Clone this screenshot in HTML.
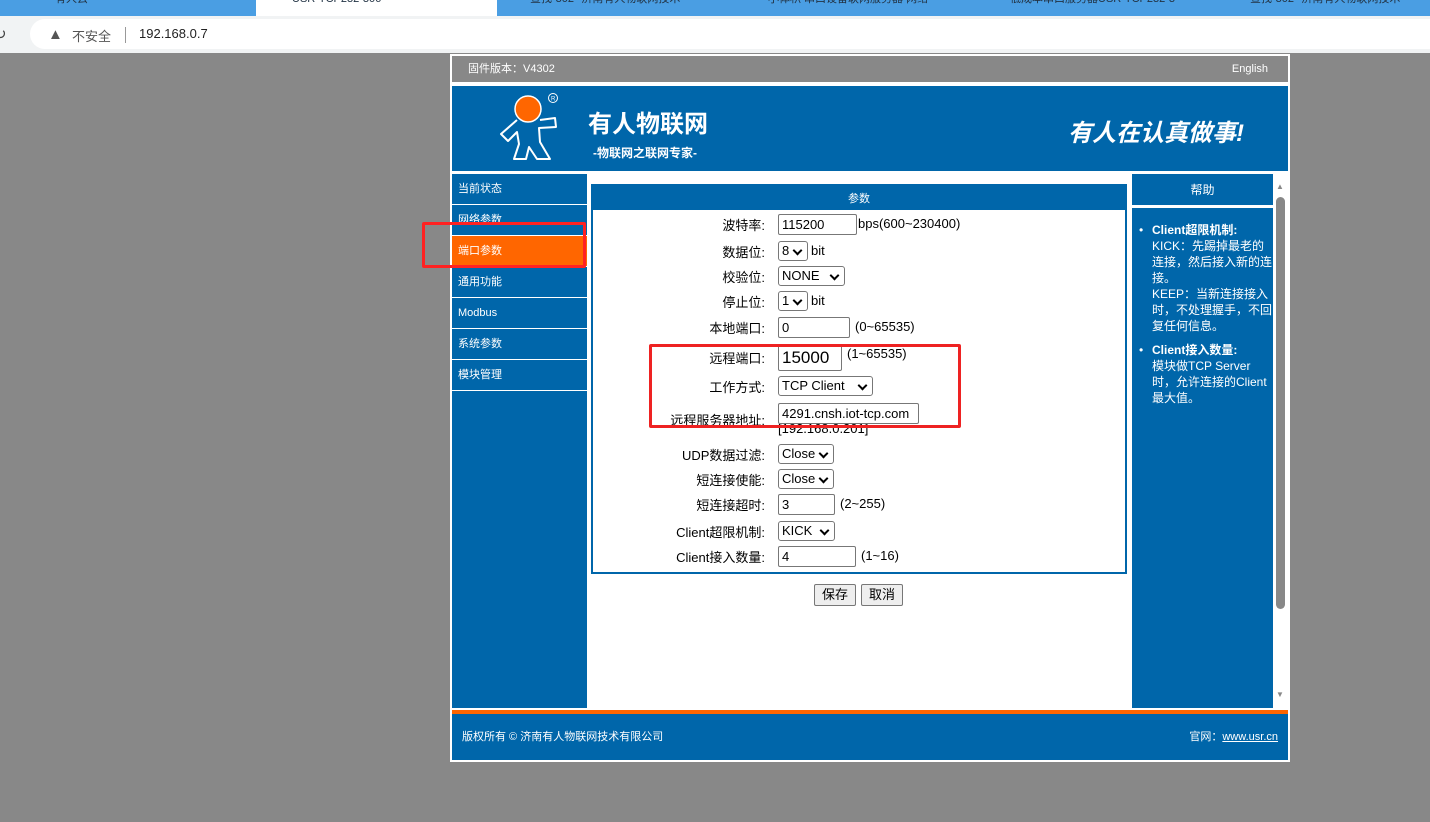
<!DOCTYPE html>
<html><head><meta charset="utf-8">
<style>
*{margin:0;padding:0;box-sizing:border-box}
body{width:1430px;height:822px;background:#888;font-family:"Liberation Sans","Noto Sans CJK SC",sans-serif;font-size:12px;position:relative;overflow:hidden;color:#000}
.abs{position:absolute}
.tabs{left:0;top:0;width:1430px;height:16px;background:#4a9ee3}
.tab{top:0;height:16px;color:#234;font-size:11px;line-height:0px;white-space:nowrap;overflow:hidden}
.addr{left:0;top:16px;width:1430px;height:37px;background:#f1f3f4}
.addrin{left:30px;top:19px;width:1420px;height:30px;background:#fff;border-radius:15px}
.panel{left:450px;top:54px;width:840px;height:708px;background:#fff}
.blue{background:#0066aa;color:#fff}
.nav div{position:absolute;left:452px;width:135px;height:30px;background:#0066aa;color:#fff;font-size:11px;line-height:30px;padding-left:6px}
.row{position:absolute;left:592px;width:533px;height:24px;font-size:13px}
.row .l{position:absolute;right:360px;top:1px;white-space:nowrap}
.row .f{position:absolute;left:186px;top:0}
.inp{display:inline-block;height:21px;border:1px solid #777;border-radius:2px;padding-left:3px;line-height:19px;font-size:13px;vertical-align:top;background:#fff}
.sel{display:inline-block;height:20px;border:1px solid #777;border-radius:3px;padding-left:3px;line-height:18px;font-size:13px;vertical-align:top;position:relative;background:#fff}
.sel:after{content:"";position:absolute;right:6px;top:5px;width:5px;height:5px;border-right:2px solid #000;border-bottom:2px solid #000;transform:rotate(45deg)}
.t{display:inline-block;vertical-align:top;line-height:19px;margin-left:3px}
.btn{position:absolute;top:584px;height:22px;border:1px solid #777;border-radius:2px;background:#eee;font-size:13px;line-height:20px;text-align:center}
</style></head><body>
<div class="abs tabs"></div>
<div class="abs" style="left:256px;top:0;width:241px;height:16px;background:#fff"></div>
<div class="abs tab" style="left:55px;top:-7px;height:14px;line-height:12px">有人云</div>
<div class="abs tab" style="left:292px;top:-7px;height:14px;line-height:12px">USR-TCP232-306</div>
<div class="abs tab" style="left:530px;top:-7px;height:14px;line-height:12px">查找“302”-济南有人物联网技术</div>
<div class="abs tab" style="left:768px;top:-7px;height:14px;line-height:12px">小体积 串口设备联网服务器 网络</div>
<div class="abs tab" style="left:1010px;top:-7px;height:14px;line-height:12px">低成本串口服务器USR-TCP232-3</div>
<div class="abs tab" style="left:1250px;top:-7px;height:14px;line-height:12px">查找“302”-济南有人物联网技术</div>
<div class="abs addr"></div>
<div class="abs addrin"></div>
<div class="abs" style="left:48px;top:26px;font-size:15px;color:#555">▲</div>
<div class="abs" style="left:72px;top:26px;font-size:13px;color:#555">不安全</div>
<div class="abs" style="left:125px;top:27px;width:1px;height:16px;background:#999"></div>
<div class="abs" style="left:139px;top:26px;font-size:13px;color:#222">192.168.0.7</div>
<div class="abs" style="left:-6px;top:25px;font-size:15px;color:#444">↻</div>

<div class="abs panel"></div>
<div class="abs" style="left:452px;top:56px;width:836px;height:26px;background:#888;color:#fff;font-size:11px;line-height:26px"><span style="margin-left:16px">固件版本：V4302</span><span style="position:absolute;right:20px">English</span></div>
<div class="abs blue" style="left:452px;top:86px;width:836px;height:85px"></div>
<svg class="abs" style="left:495px;top:90px" width="70" height="75" viewBox="0 0 70 75">
<circle cx="33" cy="19" r="13" fill="#f60" stroke="#fff" stroke-width="1.5"/>
<circle cx="58" cy="8" r="4.5" fill="none" stroke="#fff" stroke-width="1"/>
<text x="56" y="10.5" font-size="6" fill="#fff" font-family="Liberation Sans">R</text>
<path d="M22 30 L6 44 L13 51 L22 42 L24 54 L19 69 L31 69 L34 57 L42 69 L55 69 L45 52 L44 38 L61 37 L60 28 L45 30" fill="none" stroke="#fff" stroke-width="2" stroke-linejoin="round"/>
</svg>
<div class="abs" style="left:588px;top:104px;color:#fff;font-size:24px;font-weight:bold">有人物联网</div>
<div class="abs" style="left:593px;top:144px;color:#fff;font-size:12px;font-weight:bold">-物联网之联网专家-</div>
<div class="abs" style="left:1068px;top:113px;color:#fff;font-size:24px;font-weight:bold;font-style:italic">有人在认真做事!</div>

<div class="nav">
<div style="top:174px">当前状态</div>
<div style="top:205px">网络参数</div>
<div style="top:236px;background:#f60">端口参数</div>
<div style="top:267px">通用功能</div>
<div style="top:298px">Modbus</div>
<div style="top:329px">系统参数</div>
<div style="top:360px">模块管理</div>
<div style="top:391px;height:317px"></div>
</div>
<div class="abs" style="left:422px;top:222px;width:164px;height:46px;border:3px solid #f22;border-radius:2px"></div>

<div class="abs" style="left:591px;top:184px;width:536px;height:390px;border:2px solid #0066aa"></div>
<div class="abs blue" style="left:591px;top:184px;width:536px;height:26px;text-align:center;line-height:30px;font-size:11px">参数</div>

<div class="row" style="top:214px"><span class="l">波特率:</span><span class="f"><span class="inp" style="width:79px">115200</span><span class="t" style="margin-left:1px">bps(600~230400)</span></span></div>
<div class="row" style="top:241px"><span class="l">数据位:</span><span class="f"><span class="sel" style="width:30px">8</span><span class="t">bit</span></span></div>
<div class="row" style="top:266px"><span class="l">校验位:</span><span class="f"><span class="sel" style="width:67px">NONE</span></span></div>
<div class="row" style="top:291px"><span class="l">停止位:</span><span class="f"><span class="sel" style="width:30px">1</span><span class="t">bit</span></span></div>
<div class="row" style="top:317px"><span class="l">本地端口:</span><span class="f"><span class="inp" style="width:72px">0</span><span class="t" style="margin-left:5px">(0~65535)</span></span></div>
<div class="row" style="top:345px"><span class="l" style="top:3px">远程端口:</span><span class="f"><span class="inp" style="width:64px;height:26px;font-size:17px;line-height:24px">15000</span><span class="t" style="margin-left:5px;line-height:18px">(1~65535)</span></span></div>
<div class="row" style="top:376px"><span class="l">工作方式:</span><span class="f"><span class="sel" style="width:95px">TCP Client</span></span></div>
<div class="row" style="top:403px"><span class="l" style="top:7px">远程服务器地址:</span><span class="f"><span class="inp" style="width:141px">4291.cnsh.iot-tcp.com</span></span></div>
<div class="abs" style="left:778px;top:424px;font-size:13px;height:13px;overflow:hidden;line-height:9px">[192.168.0.201]</div>
<div class="abs" style="left:649px;top:344px;width:312px;height:84px;border:3px solid #e22;border-radius:2px"></div>

<div class="row" style="top:444px"><span class="l">UDP数据过滤:</span><span class="f"><span class="sel" style="width:56px">Close</span></span></div>
<div class="row" style="top:469px"><span class="l">短连接使能:</span><span class="f"><span class="sel" style="width:56px">Close</span></span></div>
<div class="row" style="top:494px"><span class="l">短连接超时:</span><span class="f"><span class="inp" style="width:57px">3</span><span class="t" style="margin-left:5px">(2~255)</span></span></div>
<div class="row" style="top:521px"><span class="l">Client超限机制:</span><span class="f"><span class="sel" style="width:57px">KICK</span></span></div>
<div class="row" style="top:546px"><span class="l">Client接入数量:</span><span class="f"><span class="inp" style="width:78px">4</span><span class="t" style="margin-left:5px">(1~16)</span></span></div>

<div class="btn" style="left:814px;width:42px">保存</div>
<div class="btn" style="left:861px;width:42px">取消</div>

<div class="abs blue" style="left:1132px;top:174px;width:141px;height:31px;text-align:center;line-height:32px;font-size:12px">帮助</div>
<div class="abs blue" style="left:1132px;top:208px;width:141px;height:500px"></div>
<div class="abs" style="left:1152px;top:222px;width:122px;font-size:12px;line-height:16px;color:#fff">
<div style="position:relative"><span style="position:absolute;left:-13px">•</span><b>Client超限机制:</b><br>KICK：先踢掉最老的<br>连接，然后接入新的连<br>接。<br>KEEP：当新连接接入<br>时，不处理握手，不回<br>复任何信息。</div>
<div style="position:relative;margin-top:8px"><span style="position:absolute;left:-13px">•</span><b>Client接入数量:</b><br>模块做TCP Server<br>时，允许连接的Client<br>最大值。</div>
</div>
<div class="abs" style="left:1274px;top:174px;width:14px;height:534px;background:#fff"></div>
<div class="abs" style="left:1276px;top:182px;font-size:8px;color:#888">▲</div>
<div class="abs" style="left:1276px;top:690px;font-size:8px;color:#888">▼</div>
<div class="abs" style="left:1276px;top:197px;width:9px;height:412px;background:#888;border-radius:5px"></div>

<div class="abs" style="left:452px;top:710px;width:836px;height:4px;background:#f60"></div>
<div class="abs blue" style="left:452px;top:714px;width:836px;height:46px;font-size:11px;line-height:46px"><span style="margin-left:10px">版权所有 © 济南有人物联网技术有限公司</span><span style="position:absolute;right:10px">官网：<u>www.usr.cn</u></span></div>
</body></html>
